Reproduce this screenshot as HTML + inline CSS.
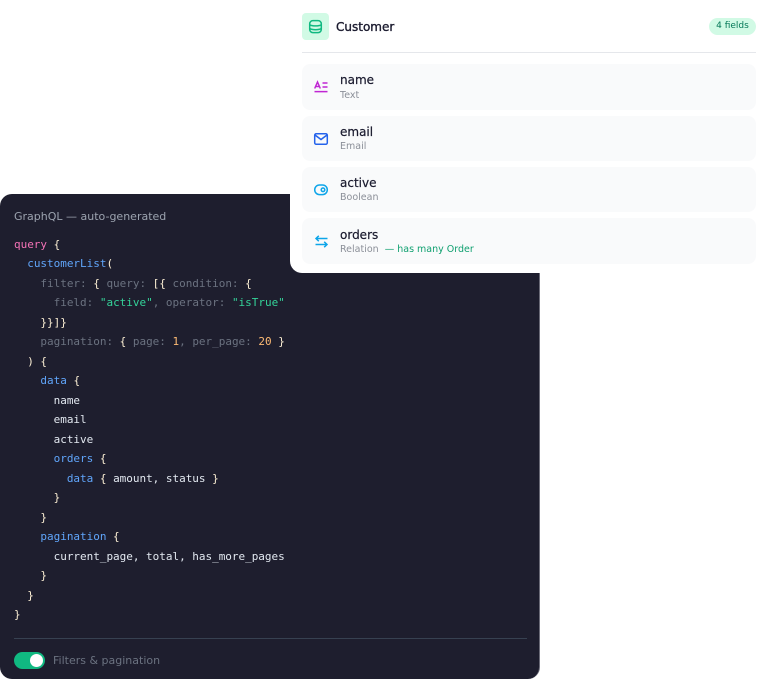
<!DOCTYPE html>
<html><head><meta charset="utf-8"><style>
html,body{margin:0;padding:0;background:#fff}
body{width:770px;height:679px;position:relative;overflow:hidden;font-family:"DejaVu Sans","Liberation Sans",sans-serif}
div,span{box-sizing:border-box}
.abs{position:absolute}
#dark{left:0;top:194px;width:540px;height:485px;background:#1e1e2e;border-radius:12px;border-right:1px solid #6b6b78}
#code{left:14px;top:234.5px;margin:0;font:11px/19.5px "DejaVu Sans Mono","Liberation Mono",monospace;color:#fdf0d5;white-space:pre;letter-spacing:-.02px}
.k{color:#f472b6}.b{color:#60a5fa}.g{color:#6b7280}.s{color:#34d399}.n{color:#fdba74}.w{color:#e2e8f0}
#card{left:290px;top:0;width:480px;height:273px;background:#fff;border-radius:0 0 12px 12px}
.row{position:absolute;left:302px;width:454px;background:#f9fafb;border-radius:8px}
.t{position:absolute;left:340px;font-size:12px;line-height:14px;color:#1a1a2e;white-space:nowrap;-webkit-text-stroke:.2px #1a1a2e}
.u{position:absolute;left:340px;font-size:9.5px;line-height:12px;color:#8b8f98;white-space:nowrap}
svg{position:absolute;overflow:visible}
</style></head><body>
<div id="dark" class="abs"></div>
<div class="abs" style="left:14px;top:210px;font-size:11px;line-height:14px;color:#9ca3af;white-space:nowrap">GraphQL — auto-generated</div>
<pre id="code" class="abs"><span class="k">query</span> {
  <span class="b">customerList</span>(
    <span class="g">filter:</span> { <span class="g">query:</span> [{ <span class="g">condition:</span> {
      <span class="g">field:</span> <span class="s">"active"</span><span class="g">,</span> <span class="g">operator:</span> <span class="s">"isTrue"</span>
    }}]}
    <span class="g">pagination:</span> { <span class="g">page:</span> <span class="n">1</span><span class="g">,</span> <span class="g">per_page:</span> <span class="n">20</span> }
  ) {
    <span class="b">data</span> {
      <span class="w">name</span>
      <span class="w">email</span>
      <span class="w">active</span>
      <span class="b">orders</span> {
        <span class="b">data</span> { <span class="w">amount, status</span> }
      }
    }
    <span class="b">pagination</span> {
      <span class="w">current_page, total, has_more_pages</span>
    }
  }
}</pre>
<div class="abs" style="left:14px;top:638px;width:513px;height:1px;background:#374151"></div>
<div class="abs" style="left:14px;top:652px;width:31px;height:17px;border-radius:9px;background:#10b981"></div>
<div class="abs" style="left:30px;top:654px;width:13px;height:13px;border-radius:50%;background:#fff"></div>
<div class="abs" style="left:53px;top:654px;font-size:11px;line-height:14px;color:#6b7280;white-space:nowrap">Filters &amp; pagination</div>

<div id="card" class="abs"></div>
<div class="abs" style="left:302px;top:13px;width:27px;height:27px;border-radius:4px;background:#d1fae5"></div>
<svg style="left:308px;top:19px" width="15" height="15" viewBox="0 0 15 15" fill="none" stroke="#10b981" stroke-width="1.5"><rect x="1.700" y="1.600" width="11.600" height="12" rx="3.200"/><path d="M1.700 5.700c2.500 1.600 9.100 1.600 11.600 0M1.700 9.500c2.500 1.600 9.100 1.600 11.600 0"/></svg>
<div class="abs" style="left:336px;top:20px;font-size:12px;line-height:15px;color:#1a1a2e;white-space:nowrap;-webkit-text-stroke:.35px #1a1a2e">Customer</div>
<div class="abs" style="left:709px;top:18px;width:47px;height:17px;border-radius:9px;background:#d1fae5;color:#047857;font-size:9px;line-height:17px;text-align:center;white-space:nowrap">4 fields</div>
<div class="abs" style="left:302px;top:52px;width:454px;height:1px;background:#e5e7eb"></div>

<div class="row" style="top:64px;height:46px"></div>
<div class="row" style="top:116px;height:45px"></div>
<div class="row" style="top:167px;height:45px"></div>
<div class="row" style="top:218px;height:46px"></div>

<svg style="left:314px;top:81px" width="14" height="13" viewBox="0 0 14 13" fill="none" stroke="#c026d3" stroke-width="1.500"><path d="M.7 7.500 3.500 1 6.300 7.500M1.700 5.500h3.600M8.500 2h5M8.500 6h5M.5 10.600h13"/></svg>
<svg style="left:314px;top:133px" width="14" height="12" viewBox="0 0 14 12" fill="none" stroke="#2563eb" stroke-width="1.500"><rect x=".7" y=".7" width="12.600" height="10.600" rx="1.500"/><path d="M1 2l6 4.500L13 2"/></svg>
<svg style="left:314px;top:184px" width="14" height="12" viewBox="0 0 14 12" fill="none" stroke="#0ea5e9" stroke-width="1.500"><rect x=".7" y="1" width="12.600" height="9.600" rx="4.800"/><circle cx="9" cy="5.800" r="1.800"/></svg>
<svg style="left:315px;top:235px" width="13" height="13" viewBox="0 0 13 13" fill="none" stroke="#0ea5e9" stroke-width="1.500"><path d="M12.500 3.500H1M3.800.8 1 3.500 3.800 6.200M.5 9.500H12M9.200 6.800 12 9.500 9.200 12.200"/></svg>

<div class="t" style="top:73px">name</div><div class="u" style="top:90px">Text</div>
<div class="t" style="top:125px">email</div><div class="u" style="top:141px">Email</div>
<div class="t" style="top:176px">active</div><div class="u" style="top:192px">Boolean</div>
<div class="t" style="top:228px">orders</div><div class="u" style="top:244px">Relation &nbsp;<span style="color:#10a070">— has many Order</span></div>
</body></html>
